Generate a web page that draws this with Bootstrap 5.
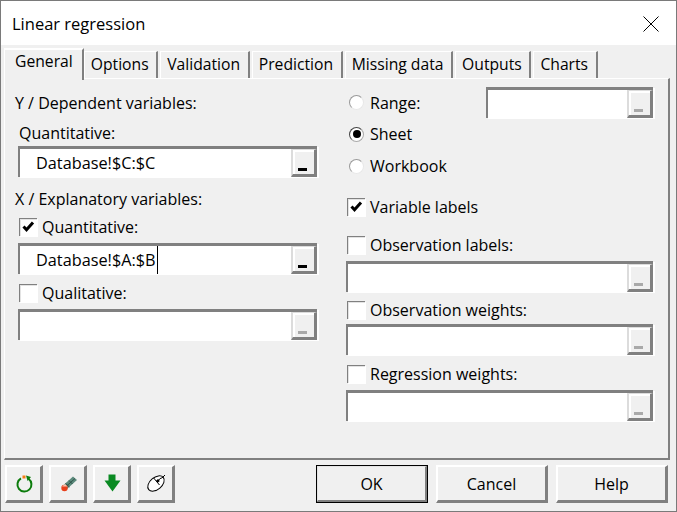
<!DOCTYPE html>
<html lang="en">
<head>
    <meta charset="UTF-8">
    <meta name="viewport" content="width=device-width, initial-scale=1.0">
    <title>Linear regression</title>
    <link href="https://cdn.jsdelivr.net/npm/bootstrap@5.3.0/dist/css/bootstrap.min.css" rel="stylesheet">
    <style>
        body {
            width: 677px; height: 512px; overflow: hidden; background: #f0f0f0; color: #000;
            font-family: "Open Sans", "Noto Sans", sans-serif; font-size: 16px; line-height: 20px;
        }
        .dlg-window { width: 677px; height: 512px; border: 1px solid #7a7a7a; background: #f0f0f0; }
        .dlg-title { height: 44px; background: #fff; padding: 1px 0 0 11px; font-size: 16.5px; }
        .dlg-close { width: 50px; }

        .dlg-tabs { height: 33px; padding-left: 3px; font-size: 15.7px; }
        .dlg-tab {
            height: 27px; margin-top: 6px; margin-right: 2px; padding: 2px 7.6px 0 6px; background: #f0f0f0;
            border-top: 1px solid #fff; border-left: 1px solid #fff; border-right: 2px solid #808080;
        }
        .dlg-tab-active {
            height: 32px; margin-top: 3px; margin-right: 0; padding: 1px 9px 0 10px;
            position: relative; z-index: 2; border-top-width: 2px; border-bottom: 0;
        }
        .dlg-panel {
            width: 666px; height: 382px; margin-left: 3px; padding: 0 0 0 9px;
            border-top: 1px solid #fff; border-left: 1px solid #fff;
            border-right: 2px solid #808080; border-bottom: 2px solid #808080;
        }
        .dlg-col-left { width: 332px; flex: none; }
        .dlg-col-right { width: 310px; flex: none; }

        .ref-field {
            height: 31px; background: #fff; padding-left: 16px; line-height: 28px; font-size: 16.3px;
            border-top: 3px solid #808080; border-left: 2px solid #808080;
            box-shadow: 2px 1px 0 #fff;
        }
        .ref-field-left { width: 299px; margin-left: 4px; }
        .ref-field-right { width: 307px; }
        .ref-field-small { width: 167px; margin-left: auto; margin-right: 3px; }
        .ref-caret { border-right: 1px solid #000; padding-right: 1px; }
        .ref-btn {
            width: 26px; height: 28px; flex: none; background: #f0f0f0; margin-left: auto; position: relative;
            border-left: 2px solid #dcdcdc; border-top: 1px solid #dcdcdc;
            border-right: 3px solid #808080; border-bottom: 3px solid #808080;
            box-shadow: inset 2px 2px 0 #fff;
        }
        .ref-btn::after {
            content: ""; position: absolute; left: 5px; bottom: 3px; width: 9px; height: 3px; background: #000;
        }
        .ref-btn-off::after { background: #a9a9a9; }

        .xl-row { height: 18px; }
        .xl-check {
            width: 18px; height: 18px; flex: none; background: #fff;
            border-top: 1px solid #808080; border-left: 1px solid #808080;
            box-shadow: inset 1px 1px 0 #e3e3e3, 1px 1px 0 #fff;
        }
        .xl-check svg { display: block; margin: 2px 0 0 2px; }
        .xl-label { margin-left: 5px; }
        .xl-radio {
            width: 15px; height: 15px; flex: none; background: #fff; border-radius: 50%; position: relative;
            border: 1px solid; border-color: #9a9a9a #e8e8e8 #e8e8e8 #9a9a9a;
        }
        .xl-radio-on { border-color: #444 #aaa #aaa #444; }
        .xl-radio-on::after {
            content: ""; position: absolute; left: 2.5px; top: 2.5px; width: 8px; height: 8px; border-radius: 50%; background: #000;
        }
        .radio-col { width: 24px; padding-left: 3px; flex: none; }

        .dlg-bar { margin: 5px 0 0 4px; width: 663px; }
        .dlg-btn {
            height: 38px; padding: 0; background: #f0f0f0; color: #000; border-radius: 0; font: inherit;
            border: 0; border-top: 2px solid #fff; border-left: 2px solid #fff;
            border-right: 3px solid #808080; border-bottom: 3px solid #808080;
        }
        .dlg-btn-icon { width: 38px; }
        .dlg-btn-text { width: 112px; }
        .dlg-btn-default { outline: 1px solid #000; outline-offset: -1px; border-top-color: #e3e3e3; border-left-color: #e3e3e3; }
        .icon-group { column-gap: 6px; }

        .sp-3 { margin-top: 3px; }
        .sp-5 { margin-top: 5px; }
        .sp-6 { margin-top: 6px; }
        .sp-7 { margin-top: 7px; }
        .sp-8 { margin-top: 8px; }
        .sp-9 { margin-top: 9px; }
        .sp-10 { margin-top: 10px; }
        .sp-12 { margin-top: 12px; }
        .sp-14 { margin-top: 14px; }
        .sp-20 { margin-top: 20px; }
        .sp-22 { margin-top: 22px; }
        .indent-1 { margin-left: 1px; }
        .indent-5 { margin-left: 5px; }
    </style>
</head>
<body>
    <div class="dlg-window">
        <div class="dlg-title d-flex align-items-center justify-content-between">
            <span>Linear regression</span>
            <div class="dlg-close d-flex justify-content-center">
                <svg width="16" height="16" viewBox="0 0 16 16"><path d="M.5.5l15 15M15.500.5l-15 15" stroke="#000" fill="none"/></svg>
            </div>
        </div>

        <div class="dlg-tabs d-flex">
            <div class="dlg-tab dlg-tab-active">General</div>
            <div class="dlg-tab">Options</div>
            <div class="dlg-tab">Validation</div>
            <div class="dlg-tab">Prediction</div>
            <div class="dlg-tab">Missing data</div>
            <div class="dlg-tab">Outputs</div>
            <div class="dlg-tab">Charts</div>
        </div>

        <div class="dlg-panel d-flex">
            <div class="dlg-col-left">
                <div class="sp-14 indent-1">Y / Dependent variables:</div>
                <div class="sp-10 indent-5">Quantitative:</div>
                <div class="ref-field ref-field-left sp-3 d-flex">
                    <span>Database!$C:$C</span>
                    <div class="ref-btn"></div>
                </div>
                <div class="sp-12 indent-1">X / Explanatory variables:</div>
                <div class="xl-row sp-9 indent-5 d-flex align-items-center">
                    <div class="xl-check"><svg width="13" height="13" viewBox="0 0 13 13"><path d="M1.500 5.500l3 3.200L11 1.500" stroke="#000" stroke-width="3" fill="none"/></svg></div>
                    <span class="xl-label">Quantitative:</span>
                </div>
                <div class="ref-field ref-field-left sp-7 d-flex">
                    <span class="ref-caret">Database!$A:$B</span>
                    <div class="ref-btn"></div>
                </div>
                <div class="xl-row sp-10 indent-5 d-flex align-items-center">
                    <div class="xl-check"></div>
                    <span class="xl-label">Qualitative:</span>
                </div>
                <div class="ref-field ref-field-left sp-7 d-flex">
                    <div class="ref-btn ref-btn-off"></div>
                </div>
            </div>

            <div class="dlg-col-right">
                <div class="sp-8 d-flex align-items-center">
                    <div class="radio-col"><div class="xl-radio"></div></div>
                    <span>Range:</span>
                    <div class="ref-field ref-field-small d-flex">
                        <div class="ref-btn ref-btn-off"></div>
                    </div>
                </div>
                <div class="sp-6 d-flex align-items-center">
                    <div class="radio-col"><div class="xl-radio xl-radio-on"></div></div>
                    <span>Sheet</span>
                </div>
                <div class="sp-12 d-flex align-items-center">
                    <div class="radio-col"><div class="xl-radio"></div></div>
                    <span>Workbook</span>
                </div>
                <div class="xl-row sp-22 indent-1 d-flex align-items-center">
                    <div class="xl-check"><svg width="13" height="13" viewBox="0 0 13 13"><path d="M1.500 5.500l3 3.200L11 1.500" stroke="#000" stroke-width="3" fill="none"/></svg></div>
                    <span class="xl-label">Variable labels</span>
                </div>
                <div class="xl-row sp-20 indent-1 d-flex align-items-center">
                    <div class="xl-check"></div>
                    <span class="xl-label">Observation labels:</span>
                </div>
                <div class="ref-field ref-field-right sp-7 d-flex">
                    <div class="ref-btn ref-btn-off"></div>
                </div>
                <div class="xl-row sp-9 indent-1 d-flex align-items-center">
                    <div class="xl-check"></div>
                    <span class="xl-label">Observation weights:</span>
                </div>
                <div class="ref-field ref-field-right sp-5 d-flex">
                    <div class="ref-btn ref-btn-off"></div>
                </div>
                <div class="xl-row sp-10 indent-1 d-flex align-items-center">
                    <div class="xl-check"></div>
                    <span class="xl-label">Regression weights:</span>
                </div>
                <div class="ref-field ref-field-right sp-7 d-flex">
                    <div class="ref-btn ref-btn-off"></div>
                </div>
            </div>
        </div>

        <div class="dlg-bar d-flex justify-content-between">
            <div class="d-flex icon-group">
                <button type="button" class="btn dlg-btn dlg-btn-icon">
                    <svg width="24" height="24" viewBox="0 0 24 24" class="d-block mx-auto">
                        <path d="M9 6.400A7 7 0 1 0 16.500 6.800" stroke="#0c7c0c" stroke-width="2" fill="none"/>
                        <path d="M14 3.500l5 1.500-3.500 4z" fill="#0c7c0c"/>
                        <rect x="10.500" y="3.500" width="3" height="3" fill="#f57c14"/>
                    </svg>
                </button>
                <button type="button" class="btn dlg-btn dlg-btn-icon">
                    <svg width="24" height="24" viewBox="0 0 24 24" class="d-block mx-auto">
                        <path d="M7 13.500L17 4.500l4 3.500-10 9z" fill="#5b8a7c"/>
                        <path d="M9.500 11.500l4 3.500M13 8.500l3.500 3.500M19 6.500l-9 8" stroke="#2f5248" stroke-width="1" fill="none"/>
                        <circle cx="8.500" cy="16" r="3.200" fill="#e8401c"/>
                        <path d="M6 14.500l3-2.500 2.500 2.500" fill="#f5c5b0"/>
                    </svg>
                </button>
                <button type="button" class="btn dlg-btn dlg-btn-icon">
                    <svg width="24" height="24" viewBox="0 0 24 24" class="d-block mx-auto">
                        <path d="M8.500 2.500h7v6h5L12.500 19.500 4.500 8.500h4z" fill="#0a8a22"/>
                    </svg>
                </button>
                <button type="button" class="btn dlg-btn dlg-btn-icon">
                    <svg width="24" height="24" viewBox="0 0 24 24" class="d-block mx-auto">
                        <ellipse cx="12" cy="11.500" rx="9.500" ry="6" transform="rotate(-40 12 11.500)" fill="#fff" stroke="#000"/>
                        <path d="M9.500 5.800l6 7.200M13 9.500L17.500 5.500M17.500 6.500L21 3" fill="none" stroke="#000"/>
                        <path d="M12 8.800l2-1.800 1.800 2-2 1.800z" fill="#000"/>
                    </svg>
                </button>
            </div>
            <div class="d-flex column-gap-2">
                <button type="button" class="btn dlg-btn dlg-btn-text dlg-btn-default">OK</button>
                <button type="button" class="btn dlg-btn dlg-btn-text">Cancel</button>
                <button type="button" class="btn dlg-btn dlg-btn-text">Help</button>
            </div>
        </div>
    </div>
</body>
</html>
